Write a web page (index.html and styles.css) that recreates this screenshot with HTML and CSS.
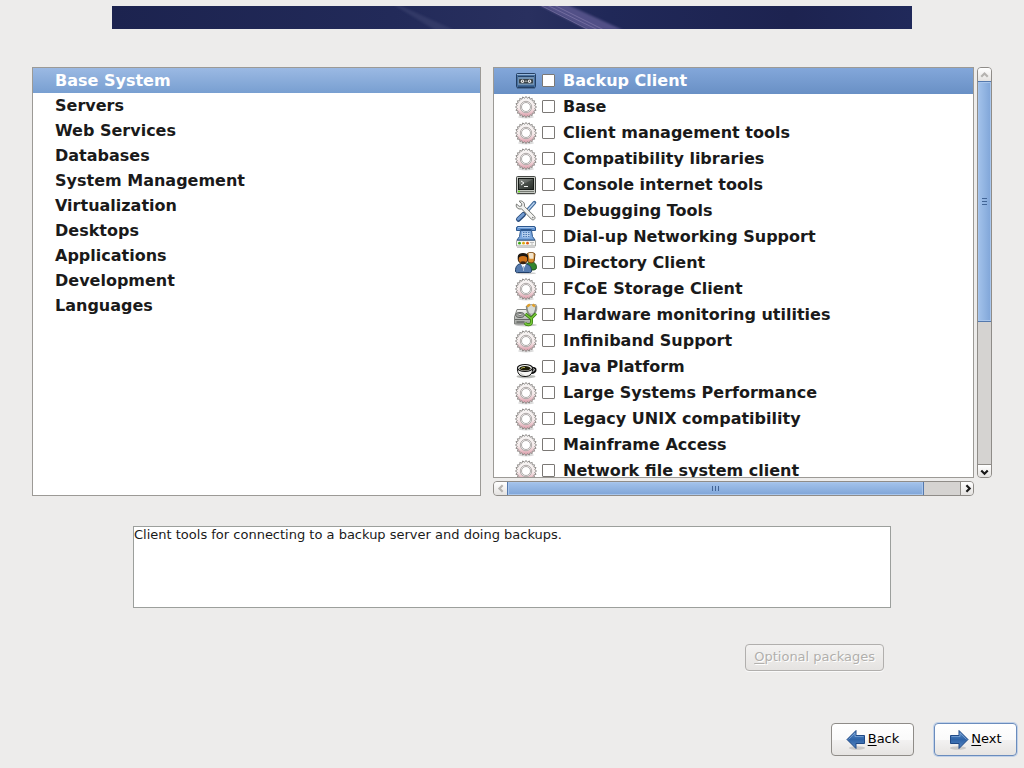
FILE: index.html
```
<!DOCTYPE html>
<html lang="en">
<head>
    <meta charset="UTF-8">
    <meta name="viewport" content="width=device-width, initial-scale=1.0">
    <title>Package Selection</title>
    <link rel="stylesheet" href="styles.css">
</head>
<body>
    <!-- Icon definitions -->
    <svg class="icon-defs" aria-hidden="true">
        <defs>
            <linearGradient id="gearFill" x1="0" y1="0" x2="0" y2="1">
                <stop offset="0" stop-color="#f6f5f4"/>
                <stop offset=".55" stop-color="#f6ecec"/>
                <stop offset="1" stop-color="#d993a2"/>
            </linearGradient>
            <linearGradient id="arrowFill" x1="0" y1="0" x2="0" y2="1">
                <stop offset="0" stop-color="#5c8fcb"/>
                <stop offset=".5" stop-color="#2f64a8"/>
                <stop offset="1" stop-color="#5585c2"/>
            </linearGradient>
            <linearGradient id="screenFill" x1="0" y1="0" x2="1" y2="1">
                <stop offset="0" stop-color="#6a706a"/>
                <stop offset="1" stop-color="#252b27"/>
            </linearGradient>
            <linearGradient id="steel" x1="0" y1="0" x2="0" y2="1">
                <stop offset="0" stop-color="#f4f4f2"/>
                <stop offset="1" stop-color="#9b9e9a"/>
            </linearGradient>
        </defs>
        <symbol id="icon-gear" viewBox="0 0 24 24">
            <ellipse cx="12" cy="22" rx="8" ry="1.5" fill="#000" opacity=".15"/>
            <path d="M22.6 12L20.700 13.400 22.100 15.300 19.800 16 20.600 18.200 18.200 18.200 18.200 20.600 16 19.800 15.300 22.100 13.400 20.700 12 22.600 10.600 20.700 8.700 22.100 8 19.800 5.800 20.600 5.800 18.200 3.400 18.200 4.200 16 1.900 15.300 3.300 13.400 1.400 12 3.300 10.600 1.900 8.700 4.200 8 3.400 5.800 5.800 5.800 5.800 3.400 8 4.200 8.700 1.900 10.600 3.300 12 1.400 13.400 3.300 15.300 1.900 16 4.200 18.200 3.400 18.200 5.800 20.600 5.800 19.800 8 22.100 8.700 20.700 10.600z" fill="url(#gearFill)" stroke="#8a8785" stroke-width=".9"/>
            <circle cx="12" cy="12" r="5.700" fill="#fff" stroke="#a8a3a2" stroke-width=".9"/>
            <circle cx="12" cy="12" r="4.500" fill="#fff" stroke="#9a9594" stroke-width=".8"/>
        </symbol>
        <symbol id="icon-backup" viewBox="0 0 24 24">
            <rect x="2.5" y="4.5" width="19" height="14" rx="1" fill="#47709f" stroke="#243f63"/>
            <path d="M3 5.5h18" stroke="#97b6d9"/>
            <path d="M4 7.5h16" stroke="#27456b"/>
            <rect x="4" y="8" width="16" height="8" fill="#7091b3"/>
            <rect x="5" y="10" width="14" height="4.5" rx="1" fill="#3b4449"/>
            <circle cx="8.5" cy="12.2" r="1.7" fill="#eee"/>
            <circle cx="15.5" cy="12.2" r="1.7" fill="#eee"/>
            <circle cx="8.5" cy="12.2" r=".6" fill="#333"/>
            <circle cx="15.5" cy="12.2" r=".6" fill="#333"/>
            <path d="M11 12.2h2" stroke="#bbb"/>
            <path d="M4 17.3h16" stroke="#2f537f"/>
            <path d="M3 19.5h18" stroke="#34506f" opacity=".5"/>
        </symbol>
        <symbol id="icon-terminal" viewBox="0 0 24 24">
            <path d="M3 21.5h18" stroke="#000" opacity=".15"/>
            <rect x="2.5" y="3.500" width="19" height="17" rx="1" fill="#c5c8c2" stroke="#454845"/>
            <rect x="4.5" y="5.5" width="15" height="11" fill="url(#screenFill)" stroke="#171b18"/>
            <path d="M5 11C9 11 15 9 19 6H5z" fill="#fff" opacity=".15"/>
            <path d="M7 8l3 2-3 2M10 13.5h4" fill="none" stroke="#f3f5f3"/>
            <path d="M4 18.5h16" stroke="#777b74"/>
            <path d="M4 18.5h2" stroke="#60d514" stroke-width="1.5"/>
        </symbol>
        <symbol id="icon-tools" viewBox="0 0 24 24">
            <path d="M20.5 3.5l-8 9" stroke="#3d6899" stroke-width="3.5" stroke-linecap="round"/>
            <path d="M20.5 3.5l-8 9" stroke="#b9d2ef" stroke-width="1.5"/>
            <path d="M11.5 13.5l-2.5 2.5" stroke="#777" stroke-width="2"/>
            <path d="M9.5 15.5l-5 4.8" stroke="#284a7a" stroke-width="5" stroke-linecap="round"/>
            <path d="M9.3 15.2l-5 4.8" stroke="#739cd1" stroke-width="2.8" stroke-linecap="round"/>
            <path d="M5 2.2l2.8 2.5-.2 2.2-2.4.5L2.5 5C1.3 8 4 10.8 7.500 9.8l9.8 10.3c2 2 5-.5 3.2-2.8L10.3 7.2C11.2 4 8.500 1 5 2.200z" fill="#f1f1ef" stroke="#777a76"/>
            <circle cx="18.8" cy="18.6" r=".8" fill="#777"/>
        </symbol>
        <symbol id="icon-phone" viewBox="0 0 24 24">
            <path d="M3 22.5h18" stroke="#000" opacity=".2"/>
            <path d="M2.5 15.5h19v5.500h-19z" fill="#f6f6f4" stroke="#a3a5a2"/>
            <path d="M6.500 5.500h11l1 6 2.500 3.500H3l2.500-3.500z" fill="#7ba7de" stroke="#2d588f"/>
            <path d="M2.500 3q0-1.500 1.500-1.500h16q1.500 0 1.500 1.500v2.500h-4v-1H6.500v1h-4z" fill="#6797d3" stroke="#2d588f"/>
            <path d="M4 2.500h16" stroke="#a5c5ec"/>
            <rect x="8" y="6.500" width="8" height="6" rx="1" fill="#b6d0ef"/>
            <path d="M9 7.500h1.500M11.500 7.500H13M14 7.500h1.500M9 9.500h1.500M11.500 9.500H13M14 9.500h1.500M9 11.500h1.500M11.500 11.500H13M14 11.500h1.500" stroke="#4a78b3"/>
            <circle cx="5.5" cy="18.200" r="1.4" fill="#3ba813"/>
            <circle cx="9.5" cy="18.200" r="1.4" fill="#e0a911"/>
            <circle cx="13.5" cy="18.200" r="1.4" fill="#e25c11"/>
            <path d="M16.5 17.5h1M18.5 17.5h1M17.5 19h1" stroke="#888"/>
        </symbol>
        <symbol id="icon-users" viewBox="0 0 24 24">
            <ellipse cx="12" cy="22.2" rx="10" ry="1" fill="#000" opacity=".2"/>
            <path d="M12 18c0-5 1-7 5-7s5.500 2.500 5.500 5.500c0 2-1.500 2.500-5 2.500z" fill="#33862d" stroke="#184f16"/>
            <path d="M13 3c1-2 7-2 8 0l-.8 7c-.5 2.500-5.700 2.500-6.200 0z" fill="#d88a2c" stroke="#704311"/>
            <path d="M14.500 2.300c2-1 4-.5 5 .5v5h-4z" fill="#f3e5cc"/>
            <path d="M1.500 20c0-5 2-7.500 7.500-7.500s8.500 2.500 8.500 7.500c0 1.500-1 1.500-2 1.500H3.500c-1 0-2 0-2-1.500z" fill="#577caf" stroke="#213e66"/>
            <path d="M7 13l2.500 5 2.500-5z" fill="#fff"/>
            <path d="M9.500 15v5" stroke="#a6b9d1"/>
            <circle cx="9" cy="8" r="4.800" fill="#cf7218" stroke="#2a1a0b"/>
            <path d="M4 8c-1-4 1-6 5-6s6 2 5 6c-1-2-2-3-5-3s-4 1-5 3z" fill="#1c1712"/>
            <path d="M6.500 10.800c1.500-.8 3.500-.8 5 0L10.500 13h-3z" fill="#37200e"/>
        </symbol>
        <symbol id="icon-monitor" viewBox="0 0 24 24">
            <ellipse cx="12" cy="22" rx="11" ry="1.500" fill="#000" opacity=".2"/>
            <path d="M3 6.500h11l3 7.500v7H.500v-7z" fill="url(#steel)" stroke="#80827f"/>
            <path d="M1 16.500h15.500" stroke="#666966"/>
            <ellipse cx="6" cy="12" rx="4.300" ry="2.500" fill="#a5a8a4" stroke="#5f625f"/>
            <ellipse cx="6" cy="11.500" rx="2" ry="1" fill="#e8e8e6" stroke="#777"/>
            <path d="M2.500 19h8" stroke="#464846"/>
            <path d="M14 1.500h8c1.500 2.500 1 6-1 9.500h-6c-2-3.500-2.500-7-1-9.500z" fill="#d6dad5" stroke="#a8aaa6"/>
            <path d="M12.500 3c0 5 1 8 5 10 3.500-2 4.500-5.500 4.500-10" fill="none" stroke="#858984" stroke-width="1.500"/>
            <path d="M13 3.500l3-2M21 3.500l-2.500-2" stroke="#e1a12e" stroke-width="2.500"/>
            <path d="M11.500 11l5.500 4.500 5-5M17.500 15v4c0 3.500-5 3.500-6.500 1" fill="none" stroke="#367b10" stroke-width="3"/>
            <path d="M11.500 11l5.500 4.500 5-5M17.500 15v4c0 3.500-5 3.500-6.500 1" fill="none" stroke="#77c839" stroke-width="1.500"/>
        </symbol>
        <symbol id="icon-java" viewBox="0 -1 24 24">
            <ellipse cx="12" cy="20.500" rx="9.500" ry="1.800" fill="#b9bbb8"/>
            <path d="M18 13c4-2 4.500 3-1 3.500" fill="none" stroke="#111" stroke-width="3"/>
            <path d="M18 13.300c3.500-1.500 3.500 2-1 2.500" fill="none" stroke="#eee"/>
            <path d="M3.500 12c-.5 5 2 8.500 7.500 8.500s8-3.500 7.500-8.500z" fill="#f5f5f3" stroke="#111"/>
            <ellipse cx="11" cy="12" rx="7.500" ry="3.500" fill="#f7f7f5" stroke="#111" stroke-width="1.200"/>
            <ellipse cx="11" cy="12.300" rx="5.500" ry="2.300" fill="#1c1b08"/>
            <path d="M7 12.500q2-1.500 4-1" fill="none" stroke="#aaa74a"/>
            <path d="M6.500 17q1.500 2.500 4 2.500" fill="none" stroke="#bfc2be"/>
        </symbol>
        <symbol id="icon-arrow" viewBox="0 0 20 20">
            <ellipse cx="11" cy="18" rx="8" ry="1.800" fill="#000" opacity=".14"/>
            <path d="M1 9.500l9-9v5h8.500v8H10v5z" fill="url(#arrowFill)" stroke="#204a87" stroke-linejoin="round"/>
            <path d="M2.500 9.500L9 3v3.500h8.500" fill="none" stroke="#8fb3de" opacity=".6"/>
        </symbol>
    </svg>

    <header class="banner">
        <svg viewBox="0 0 800 23" preserveAspectRatio="none" aria-hidden="true">
            <defs>
                <linearGradient id="sky">
                    <stop offset="0" stop-color="#1c234f"/>
                    <stop offset=".35" stop-color="#222a59"/>
                    <stop offset=".52" stop-color="#29305f"/>
                    <stop offset=".62" stop-color="#202858"/>
                    <stop offset=".85" stop-color="#1d2350"/>
                    <stop offset="1" stop-color="#20295a"/>
                </linearGradient>
                <filter id="soft"><feGaussianBlur stdDeviation="1"/></filter>
            </defs>
            <rect width="800" height="23" fill="url(#sky)"/>
            <path d="M282-1h5l55 25h-19z" fill="#48507a" opacity=".4" filter="url(#soft)"/>
            <path d="M427-1h29l55 25h-35z" fill="#66619a" opacity=".7" filter="url(#soft)"/>
            <path d="M428-1l49 25M435-1l51 25M442-1l50 25" stroke="#9087b5" opacity=".5"/>
        </svg>
    </header>

    <main class="content">
        <div class="panes">
            <ul class="categories" aria-label="Categories">
                <li><button class="category selected">Base System</button></li>
                <li><button class="category">Servers</button></li>
                <li><button class="category">Web Services</button></li>
                <li><button class="category">Databases</button></li>
                <li><button class="category">System Management</button></li>
                <li><button class="category">Virtualization</button></li>
                <li><button class="category">Desktops</button></li>
                <li><button class="category">Applications</button></li>
                <li><button class="category">Development</button></li>
                <li><button class="category">Languages</button></li>
            </ul>

            <div class="packages">
                <ul class="package-list" aria-label="Packages">
                    <li class="package selected"><svg><use href="#icon-backup"/></svg><input type="checkbox" id="p1"><label for="p1">Backup Client</label></li>
                    <li class="package"><svg><use href="#icon-gear"/></svg><input type="checkbox" id="p2"><label for="p2">Base</label></li>
                    <li class="package"><svg><use href="#icon-gear"/></svg><input type="checkbox" id="p3"><label for="p3">Client management tools</label></li>
                    <li class="package"><svg><use href="#icon-gear"/></svg><input type="checkbox" id="p4"><label for="p4">Compatibility libraries</label></li>
                    <li class="package"><svg><use href="#icon-terminal"/></svg><input type="checkbox" id="p5"><label for="p5">Console internet tools</label></li>
                    <li class="package"><svg><use href="#icon-tools"/></svg><input type="checkbox" id="p6"><label for="p6">Debugging Tools</label></li>
                    <li class="package"><svg><use href="#icon-phone"/></svg><input type="checkbox" id="p7"><label for="p7">Dial-up Networking Support</label></li>
                    <li class="package"><svg><use href="#icon-users"/></svg><input type="checkbox" id="p8"><label for="p8">Directory Client</label></li>
                    <li class="package"><svg><use href="#icon-gear"/></svg><input type="checkbox" id="p9"><label for="p9">FCoE Storage Client</label></li>
                    <li class="package"><svg><use href="#icon-monitor"/></svg><input type="checkbox" id="p10"><label for="p10">Hardware monitoring utilities</label></li>
                    <li class="package"><svg><use href="#icon-gear"/></svg><input type="checkbox" id="p11"><label for="p11">Infiniband Support</label></li>
                    <li class="package"><svg><use href="#icon-java"/></svg><input type="checkbox" id="p12"><label for="p12">Java Platform</label></li>
                    <li class="package"><svg><use href="#icon-gear"/></svg><input type="checkbox" id="p13"><label for="p13">Large Systems Performance</label></li>
                    <li class="package"><svg><use href="#icon-gear"/></svg><input type="checkbox" id="p14"><label for="p14">Legacy UNIX compatibility</label></li>
                    <li class="package"><svg><use href="#icon-gear"/></svg><input type="checkbox" id="p15"><label for="p15">Mainframe Access</label></li>
                    <li class="package"><svg><use href="#icon-gear"/></svg><input type="checkbox" id="p16"><label for="p16">Network file system client</label></li>
                </ul>

                <div class="scrollbar vertical">
                    <button class="step" aria-label="Scroll up" disabled><svg viewBox="0 0 12 12"><path d="M3 8l3-3 3 3"/></svg></button>
                    <div class="trough"><div class="thumb"><span class="grip"></span></div></div>
                    <button class="step" aria-label="Scroll down"><svg viewBox="0 0 12 12"><path d="M3 5l3 3 3-3"/></svg></button>
                </div>

                <div class="scrollbar horizontal">
                    <button class="step" aria-label="Scroll left" disabled><svg viewBox="0 0 12 12"><path d="M8 3L5 6l3 3"/></svg></button>
                    <div class="trough"><div class="thumb"><span class="grip"></span></div></div>
                    <button class="step" aria-label="Scroll right"><svg viewBox="0 0 12 12"><path d="M5 3l3 3-3 3"/></svg></button>
                </div>
            </div>
        </div>

        <div class="details">
            <textarea class="description" aria-label="Description" readonly>Client tools for connecting to a backup server and doing backups.</textarea>
            <button class="btn optional-btn" disabled><span><u>O</u>ptional packages</span></button>
        </div>
    </main>

    <footer class="actions">
        <button class="btn nav-btn"><svg><use href="#icon-arrow"/></svg><span><u>B</u>ack</span></button>
        <button class="btn nav-btn next-btn"><svg class="flip"><use href="#icon-arrow"/></svg><span><u>N</u>ext</span></button>
    </footer>
</body>
</html>
```
FILE: styles.css
```
* {
    box-sizing: border-box;
}

body {
    display: flex;
    flex-direction: column;
    height: 100vh;
    min-height: 600px;
    margin: 0;
    padding: 6px 0 12px;
    background-color: #edeceb;
    color: #1a1a1a;
    font-family: "DejaVu Sans", sans-serif;
    font-size: 13px;
}

button, textarea {
    font: inherit;
    color: inherit;
}

ul {
    margin: 0;
    padding: 0;
    list-style: none;
}

.icon-defs {
    position: absolute;
    width: 0;
    height: 0;
}

.banner {
    width: 100%;
    max-width: 800px;
    height: 23px;
    margin: 0 auto;
}

.banner svg {
    display: block;
    width: 100%;
    height: 100%;
}

.content {
    display: flex;
    flex-direction: column;
    flex: 1;
    min-height: 0;
    padding: 38px 32px 52px;
}

.panes {
    display: grid;
    grid-template-columns: minmax(0, 9fr) minmax(0, 10fr);
    grid-template-rows: minmax(0, 1fr);
    gap: 12px;
    flex: 1;
    min-height: 0;
}

/* Category list */
.categories, .package-list {
    overflow: hidden;
    background-color: #fff;
    border: 1px solid #9c9a96;
    font-size: 16px;
    font-weight: bold;
}

.category {
    display: block;
    width: 100%;
    height: 25px;
    padding: 0 22px;
    border: none;
    background: none;
    line-height: 25px;
    text-align: left;
}

.category.selected {
    background: linear-gradient(#9bb9e3, #789fd1);
    color: #fff;
}

/* Package list */
.packages {
    display: grid;
    grid-template-columns: minmax(0, 1fr) 15px;
    grid-template-rows: minmax(0, 1fr) 15px;
    gap: 3px;
    min-height: 0;
}

.package {
    display: flex;
    align-items: center;
    height: 26px;
    padding: 0 0 2px 20px;
}

.package svg {
    width: 24px;
    height: 24px;
    margin: 2px 4px 0 0;
}

.package input {
    appearance: none;
    width: 13px;
    height: 13px;
    margin: 0 8px 0 0;
    background-color: #fff;
    border: 1px solid #7b7875;
    border-radius: 1px;
}

.package input:checked {
    background-color: #4b73a8;
}

.package.selected {
    background: linear-gradient(#83a7da, #6990c5);
    color: #fff;
}

/* Scrollbars */
.scrollbar {
    display: flex;
    background-color: #d5d3d1;
    border: 1px solid #8f8c88;
    border-radius: 4px;
    overflow: hidden;
}

.vertical {
    flex-direction: column;
}

.step {
    flex: none;
    width: 13px;
    height: 13px;
    padding: 0;
    border: none;
    background: linear-gradient(#fff, #e4e2e0);
}

.step svg {
    display: block;
    width: 13px;
    height: 13px;
    fill: none;
    stroke: #1a1a1a;
    stroke-width: 2;
}

.step:disabled svg {
    stroke: #b5b3b0;
}

.vertical .step:last-child {
    border-top: 1px solid #8f8c88;
}

.horizontal .step:last-child {
    border-left: 1px solid #8f8c88;
}

.trough {
    flex: 1;
}

.thumb {
    display: flex;
    align-items: center;
    justify-content: center;
    border: 1px solid #5579ad;
    box-shadow: inset 0 0 0 1px #a9c6ec;
}

.vertical .thumb {
    height: 63%;
    border-width: 1px 0;
    background: linear-gradient(to right, #a4c3eb, #7fa5d8);
}

.horizontal .thumb {
    width: 92%;
    height: 100%;
    border-width: 0 1px;
    background: linear-gradient(#a4c3eb, #7fa5d8);
}

.grip {
    border: 1px solid #426596;
}

.vertical .grip {
    width: 5px;
    height: 7px;
    border-width: 1px 0;
    background: linear-gradient(#426596, #426596) center / 5px 1px no-repeat;
}

.horizontal .grip {
    width: 7px;
    height: 5px;
    border-width: 0 1px;
    background: linear-gradient(#426596, #426596) center / 1px 5px no-repeat;
}

/* Description and optional packages */
.details {
    display: flex;
    flex-direction: column;
    align-items: flex-end;
    gap: 36px;
    padding: 30px 101px 0;
}

.description {
    display: block;
    width: 100%;
    height: 82px;
    padding: 0;
    border: 1px solid #9c9f9c;
    outline: none;
    resize: none;
    background-color: #fff;
    line-height: 16px;
}

.btn {
    display: flex;
    align-items: center;
    justify-content: center;
    padding: 0 8px 2px;
    border: 1px solid #8f8c88;
    border-radius: 4px;
    background: linear-gradient(#fff, #fafafa 50%, #f3f2f2 50%, #e6e4e2);
    color: #000;
    text-underline-offset: 2px;
}

.optional-btn {
    height: 27px;
    margin-right: 7px;
    border-color: #b1afad;
    background: linear-gradient(#f3f2f1, #e5e3e1);
    box-shadow: 0 1px 0 #fafafa;
    color: #b1afac;
    text-shadow: 1px 1px 0 #fff;
}

/* Navigation */
.actions {
    display: flex;
    justify-content: flex-end;
    gap: 20px;
    padding-right: 7px;
}

.nav-btn {
    width: 83px;
    height: 33px;
}

.nav-btn svg {
    flex: none;
    width: 20px;
    height: 20px;
    margin: 2px 2px 0 0;
}

.nav-btn .flip {
    transform: scaleX(-1);
}

.next-btn {
    border-color: #6a8cbd;
    box-shadow: 0 0 0 1px #c1d1e8;
}
```
